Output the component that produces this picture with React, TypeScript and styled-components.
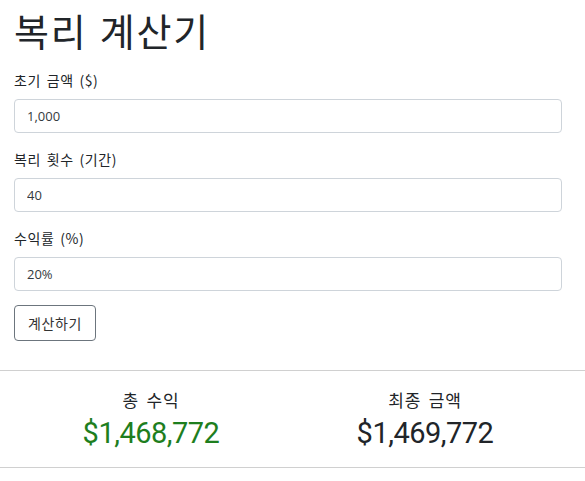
import React from "react";
import styled, { createGlobalStyle } from "styled-components";

const Global = createGlobalStyle`
  html, body { margin: 0; padding: 0; background: #fff; }
  body {
    font-family: "Open Sans", "Noto Sans CJK KR", sans-serif;
    color: #212529;
  }
  * { box-sizing: border-box; }
`;

const Page = styled.div`
  width: 585px;
  padding-top: 6px;
`;

const Inner = styled.div`
  padding: 0 14px 0 14px;
  width: 562px;
`;

const Title = styled.h1`
  margin: 0 0 16px 0;
  font-family: "Noto Sans CJK KR", sans-serif;
  font-weight: 400;
  font-size: 38px;
  line-height: 48px;
  letter-spacing: 1.8px;
  word-spacing: 2px;
`;

const Group = styled.div`
  display: flex;
  flex-direction: column;
  margin-bottom: 16px;
`;

const Label = styled.label`
  font-family: "Noto Sans CJK KR", sans-serif;
  font-size: 14px;
  line-height: 21px;
  margin-bottom: 8px;
  letter-spacing: 0.6px;
  word-spacing: 2px;
`;

const Input = styled.input`
  height: 34px;
  width: 548px;
  padding: 0 12px;
  border: 1px solid #ced4da;
  border-radius: 4px;
  font-family: "Open Sans", sans-serif;
  font-size: 13px;
  color: #343a40;
  outline: none;
`;

const Button = styled.button`
  height: 36px;
  width: 82px;
  padding: 0;
  background: #fff;
  border: 1px solid #6c757d;
  border-radius: 4px;
  font-family: "Noto Sans CJK KR", sans-serif;
  font-size: 14px;
  letter-spacing: 0.6px;
  color: #333;
  margin-top: -2px;
`;

const Divider = styled.hr`
  margin: 0;
  border: 0;
  border-top: 1px solid #d0d0d0;
`;

const Results = styled.div`
  margin-top: 29px;
`;

const Row = styled.div`
  display: grid;
  grid-template-columns: 274px 274px;
  padding: 17px 14px 13px;
`;

const Stat = styled.div`
  display: flex;
  flex-direction: column;
  align-items: center;
`;

const StatLabel = styled.div`
  font-family: "Noto Sans CJK KR", sans-serif;
  font-size: 17px;
  line-height: 24px;
  letter-spacing: 0.8px;
  word-spacing: 3px;
`;

const StatValue = styled.div<{ $green?: boolean }>`
  font-family: Roboto, sans-serif;
  font-size: 29px;
  line-height: 42px;
  letter-spacing: -0.5px;
  color: ${(p) => (p.$green ? "#1e7e1e" : "#212529")};
`;

export default function App() {
  return (
    <Page>
      <Global />
      <Inner>
        <Title>복리 계산기</Title>
        <Group>
          <Label>초기 금액 ($)</Label>
          <Input defaultValue="1,000" />
        </Group>
        <Group>
          <Label>복리 횟수 (기간)</Label>
          <Input defaultValue="40" />
        </Group>
        <Group>
          <Label>수익률 (%)</Label>
          <Input defaultValue="20%" />
        </Group>
        <Button>계산하기</Button>
      </Inner>
      <Results>
        <Divider />
        <Row>
          <Stat>
            <StatLabel>총 수익</StatLabel>
            <StatValue $green>$1,468,772</StatValue>
          </Stat>
          <Stat>
            <StatLabel>최종 금액</StatLabel>
            <StatValue>$1,469,772</StatValue>
          </Stat>
        </Row>
        <Divider />
      </Results>
    </Page>
  );
}
